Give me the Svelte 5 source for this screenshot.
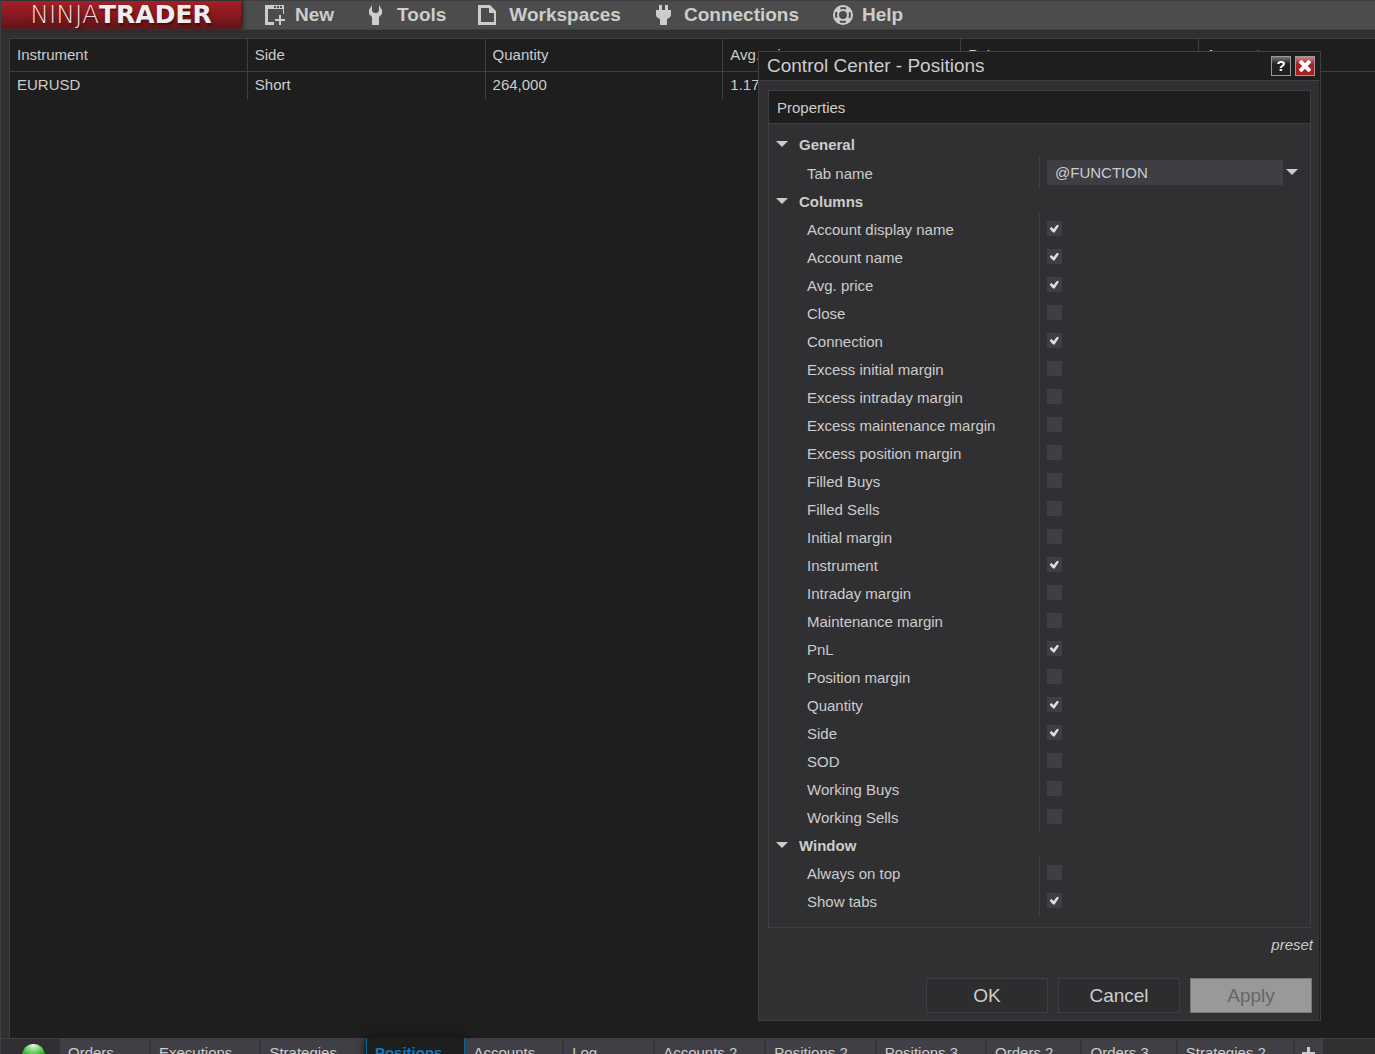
<script lang="ts">
  interface Property {
    label: string
    checked: boolean
  }

  const headers = [`Instrument`, `Side`, `Quantity`, `Avg. price`, `PnL`, `Account`]
  const positions = [[`EURUSD`, `Short`, `264,000`, `1.17`, ``, ``]]

  const tabs = [
    `Orders`,
    `Executions`,
    `Strategies`,
    `Positions`,
    `Accounts`,
    `Log`,
    `Accounts 2`,
    `Positions 2`,
    `Positions 3`,
    `Orders 2`,
    `Orders 3`,
    `Strategies 2`,
  ]
  let active_tab = $state(`Positions`)
  let tab_name = $state(`@FUNCTION`)

  let columns: Property[] = $state([
    { label: `Account display name`, checked: true },
    { label: `Account name`, checked: true },
    { label: `Avg. price`, checked: true },
    { label: `Close`, checked: false },
    { label: `Connection`, checked: true },
    { label: `Excess initial margin`, checked: false },
    { label: `Excess intraday margin`, checked: false },
    { label: `Excess maintenance margin`, checked: false },
    { label: `Excess position margin`, checked: false },
    { label: `Filled Buys`, checked: false },
    { label: `Filled Sells`, checked: false },
    { label: `Initial margin`, checked: false },
    { label: `Instrument`, checked: true },
    { label: `Intraday margin`, checked: false },
    { label: `Maintenance margin`, checked: false },
    { label: `PnL`, checked: true },
    { label: `Position margin`, checked: false },
    { label: `Quantity`, checked: true },
    { label: `Side`, checked: true },
    { label: `SOD`, checked: false },
    { label: `Working Buys`, checked: false },
    { label: `Working Sells`, checked: false },
  ])

  let window_options: Property[] = $state([
    { label: `Always on top`, checked: false },
    { label: `Show tabs`, checked: true },
  ])

  let open = $state({ general: true, columns: true, window: true })
</script>

{#snippet arrow()}
  <svg class="arrow" width="12" height="6" viewBox="0 0 12 6"><path d="M0 0h12L6 6z" /></svg>
{/snippet}

{#snippet group_title(title: string, key: `general` | `columns` | `window`)}
  <button class="group-title" aria-expanded={open[key]} onclick={() => (open[key] = !open[key])}>
    {@render arrow()}
    <span>{title}</span>
  </button>
{/snippet}

{#snippet check_rows(items: Property[], prefix: string)}
  <div class="group-body">
    {#each items as item, idx (item.label)}
      <div class="row">
        <label for="{prefix}-{idx}">{item.label}</label>
        <div class="value">
          <input type="checkbox" id="{prefix}-{idx}" bind:checked={item.checked} />
        </div>
      </div>
    {/each}
  </div>
{/snippet}

<div class="window">
  <header>
    <div class="logo"><span>NINJA</span><b>TRADER</b></div>
    <nav>
      <button>
        <svg width="22" height="20" viewBox="0 0 22 20">
          <path d="M1 0h19v9h-1V4H4v13h6v3H1z" />
          <path d="M10 1h2v2h-2zM13 1h2v2h-2zM16 1h2v2h-2z" fill="#4c4c4c" />
          <path d="M15 10h2v4h4v2h-4v4h-2v-4h-4v-2h4z" />
        </svg>
        <span>New</span>
      </button>
      <button>
        <svg width="22" height="20" viewBox="0 0 22 20">
          <path d="M6 0v6l2 2h3l2-2V0l3 5v4l-3 3v8H6v-8L3 9V5z" />
        </svg>
        <span>Tools</span>
      </button>
      <button>
        <svg width="22" height="20" viewBox="0 0 22 20">
          <path d="M0 0h12l6 6v14H0zM3 3v14h13V8h-5V3z" fill-rule="evenodd" />
        </svg>
        <span>Workspaces</span>
      </button>
      <button>
        <svg width="22" height="20" viewBox="0 0 22 20">
          <path d="M6 0h3v5h3V0h3v5h3v5c0 2-2 3-4 4v6H7v-6c-2-1-4-2-4-4V5h3z" />
        </svg>
        <span>Connections</span>
      </button>
      <button>
        <svg width="22" height="20" viewBox="0 0 22 20">
          <circle class="ring" cx="12" cy="10" r="9" />
          <circle class="ring" cx="12" cy="10" r="5" />
          <circle class="floats" cx="12" cy="10" r="7" />
        </svg>
        <span>Help</span>
      </button>
    </nav>
  </header>

  <main>
    <table>
      <thead>
        <tr>
          {#each headers as title (title)}
            <th>{title}</th>
          {/each}
        </tr>
      </thead>
      <tbody>
        {#each positions as position}
          <tr>
            {#each position as cell}
              <td>{cell}</td>
            {/each}
          </tr>
        {/each}
      </tbody>
    </table>
  </main>

  <footer>
    <span class="status"></span>
    {#each tabs as tab (tab)}
      <button class="tab" class:active={tab === active_tab} onclick={() => (active_tab = tab)}>
        {tab}
      </button>
    {/each}
    <button class="tab add" aria-label="Add tab">
      <svg width="13" height="13" viewBox="0 0 13 13"><path d="M5 0h3v5h5v3H8v5H5V8H0V5h5z" /></svg>
    </button>
  </footer>

  <div class="dialog" role="dialog" aria-labelledby="dialog-title">
    <div class="title-bar">
      <h1 id="dialog-title">Control Center - Positions</h1>
      <button class="help">?</button>
      <button class="close" aria-label="Close">
        <svg width="12" height="12" viewBox="0 0 12 12">
          <path d="M1 1l10 10M11 1L1 11" stroke="#fff" stroke-width="4" />
        </svg>
      </button>
    </div>

    <section>
      <h2>Properties</h2>
      <div class="groups">
        {@render group_title(`General`, `general`)}
        {#if open.general}
          <div class="group-body">
            <div class="row text-row">
              <label for="tab-name">Tab name</label>
              <div class="value">
                <input type="text" id="tab-name" bind:value={tab_name} />
                <button class="drop" aria-label="Tab name variables">{@render arrow()}</button>
              </div>
            </div>
          </div>
        {/if}
        {@render group_title(`Columns`, `columns`)}
        {#if open.columns}
          {@render check_rows(columns, `column`)}
        {/if}
        {@render group_title(`Window`, `window`)}
        {#if open.window}
          {@render check_rows(window_options, `window`)}
        {/if}
      </div>
    </section>

    <button class="preset">preset</button>
    <div class="actions">
      <button>OK</button>
      <button>Cancel</button>
      <button disabled>Apply</button>
    </div>
  </div>
</div>

<style>
  :global(body) {
    background: #303032;
  }
  .window {
    --line: #3f3f43;
    --dark: #1e1e1e;
    --panel: #303032;
    --field: #3f3e45;
    position: relative;
    display: flex;
    flex-direction: column;
    box-sizing: border-box;
    height: 100vh;
    overflow: hidden;
    border-left: 1px solid var(--line);
    background: var(--panel);
    color: #ccc;
    font: 15px/18px 'Liberation Sans', Arial, sans-serif;
  }
  button {
    padding: 0;
    border: none;
    background: none;
    color: inherit;
    font: inherit;
    white-space: nowrap;
  }
  svg {
    flex: none;
    fill: #ccc;
  }

  header {
    display: flex;
    flex: none;
    height: 28px;
    border-top: 1px solid var(--line);
    border-bottom: 1px solid var(--line);
    background: #4c4c4c;
  }
  .logo {
    display: flex;
    align-items: center;
    justify-content: center;
    width: 240px;
    background: linear-gradient(#a32026, #87191e 50%, #5c161a);
    box-shadow: 2px 0 4px #222;
    color: #eee;
    font: 25px/28px 'DejaVu Sans', sans-serif;
    text-shadow: 1px 2px 2px #3009;
  }
  .logo span {
    color: #ecdcdd;
    font-weight: 200;
  }
  nav {
    display: flex;
    padding-left: 7px;
  }
  nav button {
    display: flex;
    align-items: center;
    gap: 9px;
    padding: 0 16px;
    font-size: 19px;
    font-weight: bold;
  }
  nav span {
    padding-bottom: 1px;
  }
  .ring,
  .floats {
    fill: none;
    stroke: #ccc;
    stroke-width: 2px;
  }
  .floats {
    stroke-width: 5px;
    stroke-dasharray: 5 6;
    stroke-dashoffset: -3px;
  }

  main {
    flex: 1;
    min-height: 0;
    margin: 8px 0 0 8px;
    border-top: 1px solid var(--line);
    border-left: 1px solid var(--line);
    background: var(--dark);
  }
  table {
    width: 100%;
    border-collapse: separate;
    border-spacing: 0;
    table-layout: fixed;
  }
  th,
  td {
    box-sizing: border-box;
    width: 17.42%;
    padding: 0 7px;
    border-right: 1px solid var(--line);
    font-weight: normal;
    text-align: left;
  }
  th:last-child,
  td:last-child {
    width: auto;
    border-right: none;
  }
  th {
    height: 33px;
    border-bottom: 1px solid var(--line);
  }
  td {
    height: 27px;
    padding-bottom: 2px;
  }

  footer {
    display: flex;
    flex: none;
    height: 30px;
    margin-bottom: -15px;
    border-top: 1px solid var(--line);
  }
  .status {
    width: 23px;
    height: 23px;
    margin: 5px 15px 0 21px;
    border-radius: 50%;
    background: radial-gradient(circle at 50% 0, #f0fff0, #8fdc86 25%, #2fb52a 50%, #128010);
  }
  .tab {
    box-sizing: border-box;
    min-width: 91px;
    padding: 0 27px 2px 8px;
    border-right: 2px solid #353539;
    background: #403f45;
    text-align: left;
  }
  .tab.active {
    margin-top: -1px;
    padding-right: 22px;
    border-right: 1px solid #0e639c;
    border-left: 1px solid #0e639c;
    background: var(--dark);
    box-shadow: 0 0 12px #111;
    color: #1177bb;
    font-weight: bold;
  }
  .tab.add {
    min-width: 28px;
    padding: 0 7px 2px;
    border-right: none;
  }
  .tab.add svg {
    display: block;
  }

  .dialog {
    position: absolute;
    top: 51px;
    right: 54px;
    display: flex;
    flex-direction: column;
    width: 561px;
    border: 1px solid var(--line);
    background: var(--panel);
    box-shadow: inset -1px 0 var(--dark);
  }
  .title-bar {
    display: flex;
    align-items: center;
    gap: 4px;
    height: 28px;
    padding: 0 5px 0 8px;
    border-bottom: 1px solid var(--line);
    background: var(--dark);
  }
  h1 {
    flex: 1;
    margin: 0;
    font-size: 19px;
    font-weight: normal;
  }
  .title-bar button {
    display: flex;
    align-items: center;
    justify-content: center;
    box-sizing: border-box;
    width: 20px;
    height: 20px;
    border: 1px solid #999;
    background: linear-gradient(#777, #231f20 40%);
    color: #fff;
    font-weight: bold;
  }
  .title-bar .close {
    background: linear-gradient(#cf8286, #a91e23 40%);
  }
  section {
    margin: 9px 9px 0;
    border: 1px solid var(--line);
  }
  h2 {
    margin: 0;
    padding: 8px 8px 6px;
    border-bottom: 1px solid var(--line);
    background: var(--dark);
    font-size: 15px;
    font-weight: normal;
  }
  .groups {
    padding: 8px 0 10px 7px;
  }
  .group-title {
    display: flex;
    align-items: center;
    gap: 11px;
    width: 100%;
    height: 24px;
    font-weight: bold;
  }
  .group-title span {
    padding-top: 2px;
  }
  .arrow {
    display: block;
  }
  .group-body {
    position: relative;
    padding: 2px 0;
  }
  /* divider between the name and value columns */
  .group-body::before {
    content: '';
    position: absolute;
    top: 0;
    bottom: 0;
    left: 263px;
    border-left: 1px solid var(--line);
  }
  .row {
    display: grid;
    grid-template-columns: 271px 1fr;
    align-items: center;
    height: 28px;
  }
  .text-row {
    height: 29px;
  }
  label {
    padding: 2px 0 0 31px;
  }
  .value {
    display: flex;
    align-items: center;
    padding-bottom: 1px;
  }
  input {
    box-sizing: border-box;
    margin: 0;
    border: none;
    background: var(--field);
    color: inherit;
    font: inherit;
  }
  input[type='text'] {
    flex: 1;
    min-width: 0;
    height: 25px;
    padding: 0 8px;
  }
  .drop {
    padding: 6px 12px 6px 3px;
  }
  input[type='checkbox'] {
    display: grid;
    place-items: center;
    width: 15px;
    height: 15px;
    appearance: none;
  }
  input[type='checkbox']:checked::after {
    content: '';
    width: 9px;
    height: 8px;
    background: #ddd;
    clip-path: polygon(0 40%, 20% 35%, 40% 55%, 75% 5%, 95% 0, 95% 25%, 50% 100%, 35% 100%, 0 60%);
  }
  .preset {
    align-self: flex-end;
    margin: 8px 7px 24px;
    font-style: italic;
  }
  .actions {
    display: flex;
    justify-content: flex-end;
    gap: 10px;
    padding: 0 8px 7px;
  }
  .actions button {
    width: 122px;
    height: 35px;
    border: 1px solid var(--line);
    background: #2d2d2f;
    font-size: 19px;
  }
  .actions button:disabled {
    border-color: #777;
    background: #999;
    color: #666;
  }
</style>
